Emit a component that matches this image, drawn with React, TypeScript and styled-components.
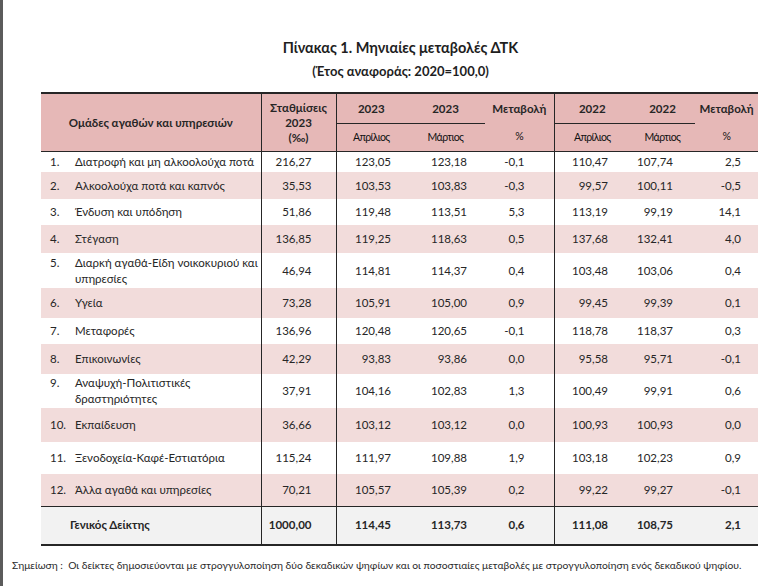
import React from 'react';
import styled, { createGlobalStyle } from 'styled-components';

const Global = createGlobalStyle`
  html, body { margin: 0; padding: 0; background: #ffffff; }
  body { font-family: Lato, "Open Sans", "Noto Sans", sans-serif; color: #262626; }
`;

const Page = styled.div`
  width: 768px;
  height: 586px;
  box-sizing: border-box;
  border-left: 3px solid #5b5b5b;
  padding-top: 38px;
  overflow: hidden;
  display: flex;
  flex-direction: column;
`;

const Title = styled.h1`
  margin: 0;
  padding-left: 30px;
  text-align: center;
  font-size: 14.5px;
  font-weight: 700;
  line-height: 20px;
  color: #1e1e1e;
`;

const Subtitle = styled.h2`
  margin: 4px 0 0;
  padding-left: 30px;
  text-align: center;
  font-size: 13px;
  font-weight: 700;
  line-height: 18px;
  color: #1e1e1e;
`;

const TableWrap = styled.div`
  margin: 12px 0 0 38px;
`;

const Table = styled.table`
  width: 717px;
  table-layout: fixed;
  border-collapse: collapse;
  font-size: 11.5px;
  border-top: 2px solid #262626;
  border-bottom: 2px solid #262626;
`;

const HeadRow = styled.tr<{ $h: number }>`
  height: ${(p) => p.$h}px;
  background: #e6b8b7;
`;

const Th = styled.th<{ $line?: boolean; $div?: boolean; $small?: boolean }>`
  padding: 0;
  font-weight: ${(p) => (p.$small ? 400 : 700)};
  font-size: ${(p) => (p.$small ? '10.5px' : '11.5px')};
  letter-spacing: ${(p) => (p.$small ? '-0.6px' : '0')};
  line-height: 15px;
  text-align: center;
  vertical-align: middle;
  color: ${(p) => (p.$small ? '#111111' : '#262626')};
  border-bottom: ${(p) => (p.$line ? '1px solid #262626' : 'none')};
  border-right: ${(p) => (p.$div ? '1px solid #262626' : 'none')};
`;

const Body = styled.tbody`
  border-top: 1px solid #262626;
`;

const BodyRow = styled.tr<{ $h: number; $band?: boolean; $total?: boolean }>`
  height: ${(p) => p.$h}px;
  background: ${(p) => (p.$total ? '#f2f2f2' : p.$band ? '#f2dcdb' : '#ffffff')};
  font-weight: ${(p) => (p.$total ? 700 : 400)};
  border-top: ${(p) => (p.$total ? '1px solid #262626' : 'none')};
`;

const Td = styled.td<{ $pr: number; $div?: boolean }>`
  padding: 0 ${(p) => p.$pr}px 0 0;
  text-align: right;
  vertical-align: middle;
  line-height: 16px;
  white-space: nowrap;
  border-right: ${(p) => (p.$div ? '1px solid #262626' : 'none')};
`;

const NameTd = styled.td`
  padding: 0;
  vertical-align: middle;
  border-right: 1px solid #262626;
`;

const NameInner = styled.div<{ $total?: boolean }>`
  display: flex;
  align-items: flex-start;
  padding-left: ${(p) => (p.$total ? '29px' : '9px')};
  line-height: 16px;
`;

const Num = styled.span`
  flex: 0 0 25px;
`;

const Label = styled.span``;

const Note = styled.p`
  margin: 12px 0 0 9px;
  font-size: 10.3px;
  line-height: 14px;
  color: #2a2a2a;
  white-space: nowrap;
`;

type Row = {
  n: string;
  name: React.ReactNode;
  v: string[];
  h: number;
};

const rows: Row[] = [
  { n: '1.', name: 'Διατροφή και μη αλκοολούχα ποτά', v: ['216,27', '123,05', '123,18', '-0,1', '110,47', '107,74', '2,5'], h: 21 },
  { n: '2.', name: 'Αλκοολούχα ποτά και καπνός', v: ['35,53', '103,53', '103,83', '-0,3', '99,57', '100,11', '-0,5'], h: 27 },
  { n: '3.', name: 'Ένδυση και υπόδηση', v: ['51,86', '119,48', '113,51', '5,3', '113,19', '99,19', '14,1'], h: 26 },
  { n: '4.', name: 'Στέγαση', v: ['136,85', '119,25', '118,63', '0,5', '137,68', '132,41', '4,0'], h: 28 },
  { n: '5.', name: <>Διαρκή αγαθά-Είδη νοικοκυριού και<br />υπηρεσίες</>, v: ['46,94', '114,81', '114,37', '0,4', '103,48', '103,06', '0,4'], h: 35 },
  { n: '6.', name: 'Υγεία', v: ['73,28', '105,91', '105,00', '0,9', '99,45', '99,39', '0,1'], h: 30 },
  { n: '7.', name: 'Μεταφορές', v: ['136,96', '120,48', '120,65', '-0,1', '118,78', '118,37', '0,3'], h: 26 },
  { n: '8.', name: 'Επικοινωνίες', v: ['42,29', '93,83', '93,86', '0,0', '95,58', '95,71', '-0,1'], h: 30 },
  { n: '9.', name: <>Αναψυχή-Πολιτιστικές<br />δραστηριότητες</>, v: ['37,91', '104,16', '102,83', '1,3', '100,49', '99,91', '0,6'], h: 34 },
  { n: '10.', name: 'Εκπαίδευση', v: ['36,66', '103,12', '103,12', '0,0', '100,93', '100,93', '0,0'], h: 34 },
  { n: '11.', name: 'Ξενοδοχεία-Καφέ-Εστιατόρια', v: ['115,24', '111,97', '109,88', '1,9', '103,18', '102,23', '0,9'], h: 32 },
  { n: '12.', name: 'Άλλα αγαθά και υπηρεσίες', v: ['70,21', '105,57', '105,39', '0,2', '99,22', '99,27', '-0,1'], h: 32 },
];

const total = ['1000,00', '114,45', '113,73', '0,6', '111,08', '108,75', '2,1'];

const colWidths = [220, 75, 70, 79, 69, 76, 65, 63];
const padRight = [24, 15, 18, 29, 22, 22, 17];
const dividers = [true, false, false, true, false, false, false];

const Values: React.FC<{ v: string[] }> = ({ v }) => (
  <>
    {v.map((x, i) => (
      <Td key={i} $pr={padRight[i]} $div={dividers[i]}>
        {x}
      </Td>
    ))}
  </>
);

export default function App() {
  return (
    <>
      <Global />
      <Page>
        <Title>Πίνακας 1. Μηνιαίες μεταβολές ΔΤΚ</Title>
        <Subtitle>(Έτος αναφοράς: 2020=100,0)</Subtitle>
        <TableWrap>
          <Table>
            <colgroup>
              {colWidths.map((w, i) => (
                <col key={i} style={{ width: w }} />
              ))}
            </colgroup>
            <thead>
              <HeadRow $h={30}>
                <Th rowSpan={2} $div>Ομάδες αγαθών και υπηρεσιών</Th>
                <Th rowSpan={2} $div>
                  Σταθμίσεις
                  <br />
                  2023
                  <br />
                  (‰)
                </Th>
                <Th $line>2023</Th>
                <Th $line>2023</Th>
                <Th $div>Μεταβολή</Th>
                <Th $line>2022</Th>
                <Th $line>2022</Th>
                <Th>Μεταβολή</Th>
              </HeadRow>
              <HeadRow $h={28}>
                <Th $small>Απρίλιος</Th>
                <Th $small>Μάρτιος</Th>
                <Th $div $small>%</Th>
                <Th $small>Απρίλιος</Th>
                <Th $small>Μάρτιος</Th>
                <Th $small>%</Th>
              </HeadRow>
            </thead>
            <Body>
              {rows.map((r, i) => (
                <BodyRow key={r.n} $h={r.h} $band={i % 2 === 1}>
                  <NameTd>
                    <NameInner>
                      <Num>{r.n}</Num>
                      <Label>{r.name}</Label>
                    </NameInner>
                  </NameTd>
                  <Values v={r.v} />
                </BodyRow>
              ))}
              <BodyRow $h={39} $total>
                <NameTd>
                  <NameInner $total>
                    <Label>Γενικός Δείκτης</Label>
                  </NameInner>
                </NameTd>
                <Values v={total} />
              </BodyRow>
            </Body>
          </Table>
        </TableWrap>
        <Note>
          Σημείωση :&nbsp; Οι δείκτες δημοσιεύονται με στρογγυλοποίηση δύο δεκαδικών ψηφίων και οι ποσοστιαίες μεταβολές με στρογγυλοποίηση ενός δεκαδικού ψηφίου.
        </Note>
      </Page>
    </>
  );
}
